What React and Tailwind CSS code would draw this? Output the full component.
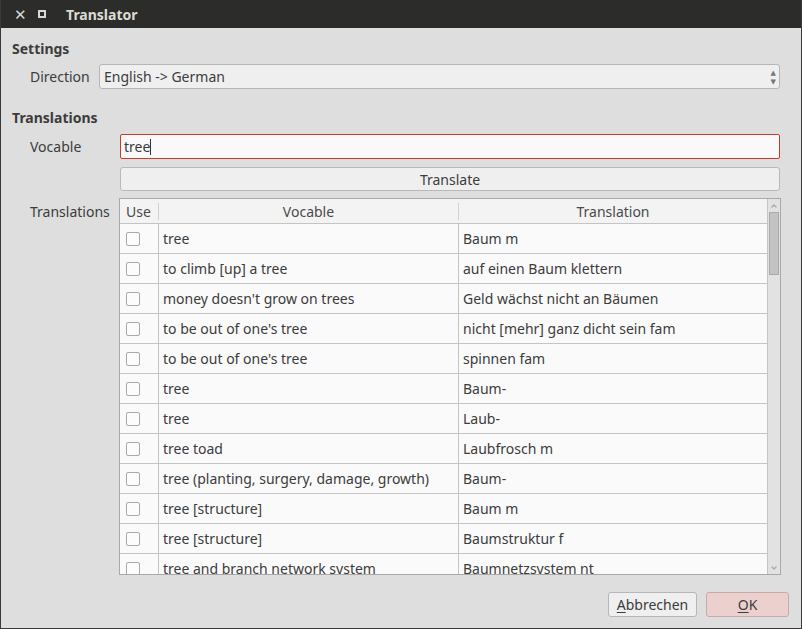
import { ChevronUp, ChevronDown } from "lucide-react";

const rows = [
  ["tree", "Baum m"],
  ["to climb [up] a tree", "auf einen Baum klettern"],
  ["money doesn't grow on trees", "Geld wächst nicht an Bäumen"],
  ["to be out of one's tree", "nicht [mehr] ganz dicht sein fam"],
  ["to be out of one's tree", "spinnen fam"],
  ["tree", "Baum-"],
  ["tree", "Laub-"],
  ["tree toad", "Laubfrosch m"],
  ["tree (planting, surgery, damage, growth)", "Baum-"],
  ["tree [structure]", "Baum m"],
  ["tree [structure]", "Baumstruktur f"],
  ["tree and branch network system", "Baumnetzsystem nt"],
];

export default function App() {
  return (
    <div
      className="w-[802px] h-[629px] flex flex-col bg-[#dedede] text-[#3c3c3c] text-[14px] overflow-hidden border-l border-r border-b border-[#3a3a3a]"
      style={{ fontFamily: '"Noto Sans", "DejaVu Sans", sans-serif' }}
    >
      <header className="h-[28px] shrink-0 bg-[#2c2c2a] flex items-center text-[#dfdbd2]">
        <span className="w-[14px] ml-[13px] text-[15px] font-bold leading-none text-[#d8d8d8]">✕</span>
        <span className="ml-[10px] w-[8px] h-[8px] border-2 border-[#d8d8d8]" />
        <span className="ml-[20px] font-bold text-[14px]">Translator</span>
      </header>

      <main className="flex-1 flex flex-col px-[11px] pt-[12px]">
        <h2 className="font-bold leading-[18px]">Settings</h2>

        <div className="flex items-center mt-[6px] pl-[18px] pr-[10px]">
          <span className="w-[69px]">Direction</span>
          <div className="flex-1 h-[25px] flex items-center justify-between bg-[#efefef] border border-[#b6b6b6] rounded-[3px] pl-[4px] pr-[3px]">
            <span>English -&gt; German</span>
            <div className="flex flex-col text-[#777]">
              <span className="text-[7px] leading-[9px]">▲</span>
              <span className="text-[7px] leading-[9px]">▼</span>
            </div>
          </div>
        </div>

        <h2 className="font-bold leading-[18px] mt-[20px]">Translations</h2>

        <div className="flex mt-[7px] pl-[18px] pr-[10px]">
          <div className="w-[90px] flex flex-col">
            <span className="h-[25px] leading-[25px]">Vocable</span>
            <span className="mt-[42px] leading-[22px]">Translations</span>
          </div>

          <div className="flex-1 flex flex-col">
            <div className="h-[25px] flex items-center bg-[#f9f9f9] border border-[#c9392c] rounded-[2px] pl-[3px]">
              <span>tree</span>
              <span className="w-px h-[16px] bg-[#333]" />
            </div>
            <div className="h-[24px] mt-[8px] flex items-center justify-center bg-[#efefef] border border-[#b9b9b9] rounded-[3px]">
              Translate
            </div>

            <div className="mt-[7px] -ml-px mr-[-1px] h-[377px] flex border border-[#a9a9a9] bg-[#fafafa] overflow-hidden">
              <div className="flex-1 flex flex-col overflow-hidden">
                <div className="h-[25px] shrink-0 flex items-center bg-[#f3f3f3] border-b border-[#c4c4c4] text-[#4a4a4a]">
                  <div className="w-[39px] pl-[6px] border-r border-[#d2d2d2] h-[17px] leading-[17px]">Use</div>
                  <div className="w-[300px] text-center border-r border-[#d2d2d2] h-[17px] leading-[17px]">Vocable</div>
                  <div className="flex-1 text-center h-[17px] leading-[17px]">Translation</div>
                </div>
                {rows.map(([voc, tr], i) => (
                  <div key={i} className="h-[30px] shrink-0 flex border-b border-[#c4c4c4]">
                    <div className="w-[39px] flex items-center pl-[6px] border-r border-[#c4c4c4]">
                      <span className="w-[14px] h-[14px] border border-[#a9a9a9] rounded-[2px] bg-[#fcfcfc]" />
                    </div>
                    <div className="w-[300px] flex items-center pl-[4px] border-r border-[#c4c4c4] whitespace-nowrap">
                      {voc}
                    </div>
                    <div className="flex-1 flex items-center pl-[4px] whitespace-nowrap">{tr}</div>
                  </div>
                ))}
              </div>

              <div className="w-[13px] shrink-0 flex flex-col bg-[#e2e2e2] border-l border-[#c4c4c4]">
                <div className="h-[13px] flex items-center justify-center text-[#a8a8a8]">
                  <ChevronUp size={8} strokeWidth={4} />
                </div>
                <div className="h-[63px] mx-px bg-[#c3c3c3] border border-[#a9a9a9]" />
                <div className="flex-1" />
                <div className="h-[13px] flex items-center justify-center text-[#a8a8a8]">
                  <ChevronDown size={8} strokeWidth={4} />
                </div>
              </div>
            </div>
          </div>
        </div>

        <div className="flex justify-end gap-[9px] mt-[17px] pr-[1px]">
          <button className="w-[89px] h-[25px] bg-[#efefef] border border-[#b6b6b6] rounded-[3px]">
            <span className="underline underline-offset-2">A</span>bbrechen
          </button>
          <button className="w-[83px] h-[25px] bg-[#ecd0ce] border border-[#c9aaa8] rounded-[3px]">
            <span className="underline underline-offset-2">O</span>K
          </button>
        </div>
      </main>
    </div>
  );
}
